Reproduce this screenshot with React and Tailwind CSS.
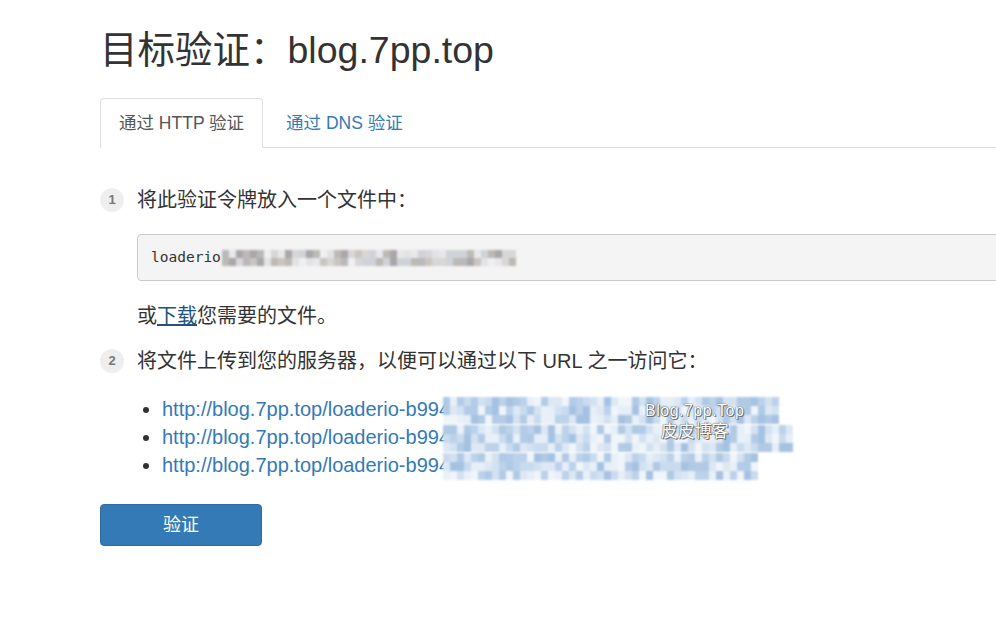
import React from 'react';

const FONT = '"Liberation Sans", Arial, "Noto Sans CJK SC", sans-serif';

// tiny seeded random so the blurred parts look the same every render
const rng = (seed) => {
  let s = seed;
  return () => {
    s = (s * 9301 + 49297) % 233280;
    return s / 233280;
  };
};

const GRAYS = ['#f0f0f2', '#d8d6d6', '#c9c6c2', '#b9b9bc', '#a9a7a9', '#e3e3e6', '#cfd3d8', '#bdbab6', '#e8e8ea'];
const BLUES = ['#e6eef7', '#c9dbee', '#b3cbe6', '#a5c2e2', '#dde8f4', '#f0f5fa', '#b0c9e4', '#d3e2f1', '#bcd1ea', '#e9f0f8'];

const Mosaic = ({ cols, rows, cellH, palette, seed, className = '' }) => {
  const r = rng(seed);
  return (
    <span className={`inline-flex flex-col align-middle blur-[1px] ${className}`}>
      {Array.from({ length: rows }).map((_, i) => (
        <span key={i} className="flex">
          {Array.from({ length: cols }).map((_, j) => (
            <span
              key={j}
              className="block w-[7px]"
              style={{ height: cellH, backgroundColor: palette[Math.floor(r() * palette.length)] }}
            />
          ))}
        </span>
      ))}
    </span>
  );
};

const Badge = ({ n }) => (
  <span className="flex items-center justify-center w-[24px] h-[24px] rounded-full bg-[#eeeeee] text-[#777] text-[13px] font-bold shrink-0">
    {n}
  </span>
);

const urls = [
  { cols: 48, seed: 11 },
  { cols: 50, seed: 37 },
  { cols: 45, seed: 73 },
];

export default function App() {
  return (
    <div className="min-h-screen bg-white text-[#333] overflow-hidden" style={{ fontFamily: FONT }}>
      <div className="pl-[100px]">
        <h1 className="mt-[30px] text-[37.5px] leading-[41px] font-normal text-[#333] whitespace-nowrap">
          目标验证：blog.7pp.top
        </h1>

        <ul className="mt-[27px] flex border-b border-[#dddddd] text-[17.5px]">
          <li className="-mb-px">
            <a className="block px-[18px] py-[13px] leading-[22px] border border-[#dddddd] border-b-white rounded-t-[4px] bg-white text-[#555]">
              通过 HTTP 验证
            </a>
          </li>
          <li className="-mb-px">
            <a className="block px-[22px] py-[13px] leading-[22px] border border-transparent text-[#337ab7]">
              通过 DNS 验证
            </a>
          </li>
        </ul>

        <div className="mt-[38px] flex items-center text-[20px] leading-[28px]">
          <Badge n="1" />
          <span className="ml-[13px]">将此验证令牌放入一个文件中：</span>
        </div>

        <div className="ml-[37px] mt-[20px]">
          <pre
            className="-mr-[30px] bg-[#f4f4f4] border border-[#cccccc] rounded-[4px] px-[13px] py-[12px] text-[14.5px] leading-[21px] text-[#333] whitespace-nowrap"
            style={{ fontFamily: '"DejaVu Sans Mono", "Liberation Mono", monospace' }}
          >
            loaderio<Mosaic cols={42} rows={2} cellH={8} palette={GRAYS} seed={5} className="ml-[1px] -my-[2px]" />
          </pre>

          <p className="mt-[21px] text-[20px] leading-[28px]">
            或<a className="text-[#23527c] underline">下载</a>您需要的文件。
          </p>
        </div>

        <div className="mt-[17px] flex items-center text-[20px] leading-[28px]">
          <Badge n="2" />
          <span className="ml-[13px]">将文件上传到您的服务器，以便可以通过以下 URL 之一访问它：</span>
        </div>

        <div className="relative ml-[37px] mt-[20px]">
          <ul className="list-disc pl-[25px] text-[20px] leading-[28px] text-[#337ab7]">
            {urls.map((u, i) => (
              <li key={i} className="h-[28px] whitespace-nowrap marker:text-[#333]">
                <a>http://blog.7pp.top/loaderio-b994</a>
                <Mosaic cols={u.cols} rows={3} cellH={9} palette={BLUES} seed={u.seed} className="-ml-[7px] -my-[6px]" />
              </li>
            ))}
          </ul>
          <div className="absolute left-[508px] top-[6px] flex flex-col items-center text-white leading-[20px] [text-shadow:0_0_1px_#555,0_0_1px_#555,1px_1px_0_#777]">
            <span className="text-[16px] tracking-[0.5px]">Blog.7pp.Top</span>
            <span className="text-[17px] mt-[1px]">皮皮博客</span>
          </div>
        </div>

        <button className="mt-[25px] w-[162px] h-[42px] rounded-[4px] bg-[#337ab7] border border-[#2e6da4] text-white text-[18px]">
          验证
        </button>
      </div>
    </div>
  );
}
